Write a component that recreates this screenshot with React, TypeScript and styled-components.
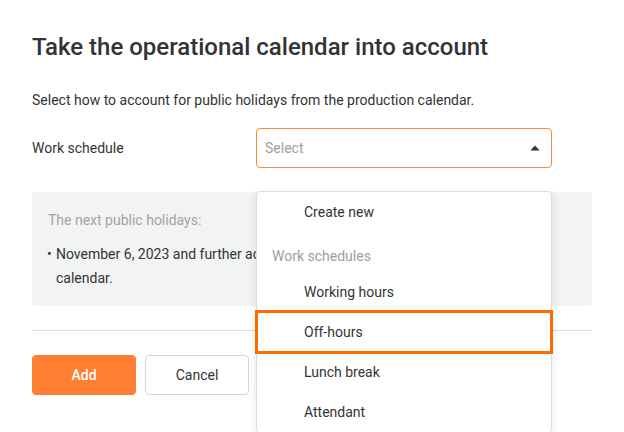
import React from 'react'
import styled, { createGlobalStyle } from 'styled-components'

const GlobalStyle = createGlobalStyle`
  * {
    box-sizing: border-box;
  }

  body {
    margin: 0;
    background: #ffffff;
    font-family: Roboto, 'Liberation Sans', Arial, sans-serif;
    color: #333333;
  }
`

const Page = styled.div`
  width: 624px;
  height: 432px;
  padding: 32px 32px 0;
  overflow: hidden;
`

const Title = styled.h1`
  margin: 0 0 28px;
  font-size: 24px;
  line-height: 30px;
  font-weight: 500;
  color: #333333;
`

const Lead = styled.p`
  margin: 0 0 18px;
  font-size: 14px;
  line-height: 20px;
`

const FieldRow = styled.div`
  display: flex;
  align-items: center;
  margin-bottom: 24px;
`

const FieldLabel = styled.label`
  width: 224px;
  font-size: 14px;
  line-height: 20px;
`

const SelectWrap = styled.div`
  position: relative;
  width: 296px;
`

const SelectBox = styled.div`
  display: flex;
  align-items: center;
  justify-content: space-between;
  height: 40px;
  padding: 0 11px 0 8px;
  border: 1px solid #ff8a3d;
  border-radius: 4px;
  background: #ffffff;
`

const Placeholder = styled.span`
  font-size: 14px;
  color: #9e9e9e;
`

const Menu = styled.ul`
  position: absolute;
  top: calc(100% + 23px);
  left: 0;
  right: 0;
  z-index: 10;
  margin: 0;
  padding: 0;
  list-style: none;
  background: #ffffff;
  border: 1px solid #dddddd;
  border-radius: 4px;
  box-shadow: 0 2px 8px rgba(0, 0, 0, 0.1);
`

const MenuItem = styled.li<{ $active?: boolean }>`
  display: flex;
  align-items: center;
  height: 40px;
  padding-left: 47px;
  font-size: 14px;
  color: #333333;
  outline: ${(p) => (p.$active ? '3px solid #ff6b00' : 'none')};
  outline-offset: -1px;
`

const MenuGroup = styled.li`
  display: flex;
  align-items: center;
  height: 40px;
  padding: 8px 0 0 15px;
  font-size: 14px;
  color: #9e9e9e;
`

const InfoPanel = styled.div`
  padding: 16px 16px;
  background: #f2f3f3;
  border-radius: 4px;
`

const InfoTitle = styled.div`
  font-size: 14px;
  line-height: 24px;
  color: #a3a3a3;
  margin-bottom: 10px;
`

const InfoList = styled.ul`
  margin: 0;
  padding: 0 0 0 8px;
  list-style: none;
`

const InfoItem = styled.li`
  position: relative;
  font-size: 14px;
  line-height: 24px;
  padding-right: 24px;

  &::before {
    content: '•';
    position: absolute;
    left: -9px;
    font-size: 14px;
  }
`

const Divider = styled.hr`
  margin: 24px 0;
  border: 0;
  border-top: 1px solid #dddddd;
`

const Actions = styled.div`
  display: flex;
  gap: 9px;
`

const Button = styled.button<{ $primary?: boolean }>`
  width: 104px;
  height: 40px;
  border-radius: 4px;
  font-family: inherit;
  font-size: 14px;
  font-weight: ${(p) => (p.$primary ? 500 : 400)};
  cursor: pointer;
  border: 1px solid ${(p) => (p.$primary ? '#ff7f32' : '#d6d6d6')};
  background: ${(p) => (p.$primary ? '#ff7f32' : '#ffffff')};
  color: ${(p) => (p.$primary ? '#ffffff' : '#333333')};
`

const Caret = () => (
  <svg width="10" height="6" viewBox="0 0 10 6">
    <path d="M5 0.5 L9.6 5.5 H0.4 Z" fill="#333333" />
  </svg>
)

const schedules = ['Working hours', 'Off-hours', 'Lunch break', 'Attendant']

export default function App() {
  return (
    <Page>
      <GlobalStyle />
      <Title>Take the operational calendar into account</Title>
      <Lead>
        Select how to account for public holidays from the production calendar.
      </Lead>
      <FieldRow>
        <FieldLabel>Work schedule</FieldLabel>
        <SelectWrap>
          <SelectBox>
            <Placeholder>Select</Placeholder>
            <Caret />
          </SelectBox>
          <Menu>
            <MenuItem>Create new</MenuItem>
            <MenuGroup>Work schedules</MenuGroup>
            {schedules.map((name) => (
              <MenuItem key={name} $active={name === 'Off-hours'}>
                {name}
              </MenuItem>
            ))}
          </Menu>
        </SelectWrap>
      </FieldRow>
      <InfoPanel>
        <InfoTitle>The next public holidays:</InfoTitle>
        <InfoList>
          <InfoItem>
            November 6, 2023 and further according to the dates set in the
            production calendar.
          </InfoItem>
        </InfoList>
      </InfoPanel>
      <Divider />
      <Actions>
        <Button $primary>Add</Button>
        <Button>Cancel</Button>
      </Actions>
    </Page>
  )
}
